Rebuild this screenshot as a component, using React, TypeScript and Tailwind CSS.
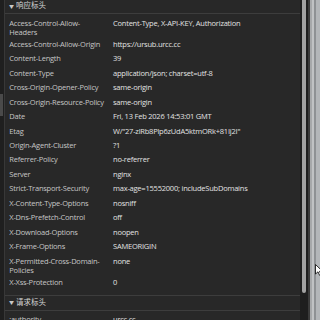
const responseHeaders: { name: string; name2?: string; value: string }[] = [
  { name: "Access-Control-Allow-", name2: "Headers", value: "Content-Type, X-API-KEY, Authorization" },
  { name: "Access-Control-Allow-Origin", value: "https://ursub.urcc.cc" },
  { name: "Content-Length", value: "39" },
  { name: "Content-Type", value: "application/json; charset=utf-8" },
  { name: "Cross-Origin-Opener-Policy", value: "same-origin" },
  { name: "Cross-Origin-Resource-Policy", value: "same-origin" },
  { name: "Date", value: "Fri, 13 Feb 2026 14:53:01 GMT" },
  { name: "Etag", value: 'W/"27-zlRb8Plp6zUdA5ktmORk+81Ij2I"' },
  { name: "Origin-Agent-Cluster", value: "?1" },
  { name: "Referrer-Policy", value: "no-referrer" },
  { name: "Server", value: "nginx" },
  { name: "Strict-Transport-Security", value: "max-age=15552000; includeSubDomains" },
  { name: "X-Content-Type-Options", value: "nosniff" },
  { name: "X-Dns-Prefetch-Control", value: "off" },
  { name: "X-Download-Options", value: "noopen" },
  { name: "X-Frame-Options", value: "SAMEORIGIN" },
  { name: "X-Permitted-Cross-Domain-", name2: "Policies", value: "none" },
  { name: "X-Xss-Protection", value: "0" },
];

const SectionHeader = ({ title }: { title: string }) => (
  <div className="h-[14px] flex items-center gap-[2px] pl-[4px] text-[#d6d6d6] text-[7.5px]">
    <span className="text-[5px] leading-none text-[#c8c8c8]">▼</span>
    <span className="leading-none">{title}</span>
  </div>
);

const HeaderRow = ({ name, name2, value }: { name: string; name2?: string; value: string }) => (
  <div className="flex items-start min-h-[14.46px] pt-[1.4px] pb-[1.3px] leading-[9.2px] text-[7.5px] tracking-[-0.22px]">
    <div className="w-[108px] shrink-0 pl-[4.3px] text-[#c6c6c6] whitespace-nowrap">
      {name}
      {name2 && (
        <>
          <br />
          {name2}
        </>
      )}
    </div>
    <div className="text-[#e2e2e2] whitespace-nowrap">{value}</div>
  </div>
);

export default function App() {
  return (
    <div className="relative w-[320px] h-[320px] overflow-hidden bg-[#282828] flex font-['Open_Sans','Noto_Sans_CJK_SC',sans-serif]">
      {/* left edge */}
      <div className="w-[5px] shrink-0 bg-[#1f1f1f] border-r border-[#383838]" />

      {/* headers list */}
      <div className="flex-1 min-w-0 mt-[-1px]">
        <div className="border-b border-[#3d3d3d]">
          <SectionHeader title="响应标头" />
        </div>
        <div className="pt-[3.3px] pb-[4.2px]">
          {responseHeaders.map((h) => (
            <HeaderRow key={h.name} {...h} />
          ))}
        </div>
        <div className="border-t border-b border-[#3d3d3d]">
          <SectionHeader title="请求标头" />
        </div>
        <div className="pt-[2.5px]">
          <HeaderRow name=":authority" value="urcc.cc" />
        </div>
      </div>

      {/* scrollbar */}
      <div className="w-[8px] shrink-0 bg-[#1e1e1e] pl-[2px]">
        <div className="w-[4px] h-[293px] bg-[#a2a2a2] rounded-b-[2px]" />
      </div>

      {/* neighbouring pane edge */}
      <div className="w-[12px] shrink-0 flex">
        <div className="w-[2px] bg-[#3a3a3a]" />
        <div className="w-[2px] bg-[#a6a8aa]" />
        <div className="w-[2px] bg-[#c0c2c4]" />
        <div className="w-[2px] bg-[#8e9194]" />
        <div className="flex-1 bg-[#b3b6b9]" />
      </div>

      {/* left pane scroll sliver */}
      <div className="absolute left-0 top-[94px] w-[3px] h-[22px] bg-[#4a4a4a]" />

      {/* mouse cursor */}
      <svg className="absolute left-[315px] top-[264px]" width="8" height="12" viewBox="0 0 8 12">
        <path d="M0.5 0.5 L0.5 10 L3 7.8 L4.6 11.3 L6 10.6 L4.5 7.3 L7.5 7.3 Z" fill="#ffffff" stroke="#000000" strokeWidth="0.8" />
      </svg>
    </div>
  );
}
